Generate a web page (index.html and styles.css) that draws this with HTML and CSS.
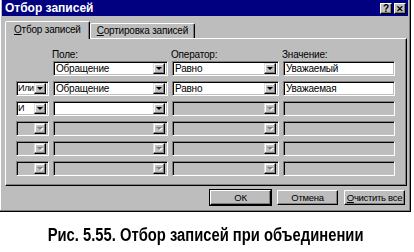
FILE: index.html
```html
<!DOCTYPE html>
<html lang="ru">
<head>
  <meta charset="UTF-8">
  <title>Отбор записей</title>
  <link rel="stylesheet" href="styles.css">
</head>
<body>
  <div class="dialog">
    <div class="titlebar">
      <span class="title">Отбор записей</span>
      <div class="tb-buttons">
        <span class="tb-btn">?</span>
        <span class="tb-btn close">✕</span>
      </div>
    </div>

    <div class="tabs">
      <div class="tab active"><u>О</u>тбор записей</div>
      <div class="tab"><u>С</u>ортировка записей</div>
    </div>

    <div class="panel">
      <div class="grid">
        <span></span>
        <span class="label">Поле:</span>
        <span class="label">Оператор:</span>
        <span class="label">Значение:</span>

        <span></span>
        <div class="combo"><span class="text">Обращение</span><span class="drop"></span></div>
        <div class="combo"><span class="text">Равно</span><span class="drop"></span></div>
        <div class="field"><span class="text">Уважаемый</span></div>

        <div class="combo small"><span class="text">Или</span><span class="drop"></span></div>
        <div class="combo"><span class="text">Обращение</span><span class="drop"></span></div>
        <div class="combo"><span class="text">Равно</span><span class="drop"></span></div>
        <div class="field"><span class="text">Уважаемая</span></div>

        <div class="combo small"><span class="text">И</span><span class="drop"></span></div>
        <div class="combo"><span class="text"></span><span class="drop"></span></div>
        <div class="combo off"><span class="text"></span><span class="drop"></span></div>
        <div class="field off"></div>

        <div class="combo small off"><span class="text"></span><span class="drop"></span></div>
        <div class="combo off"><span class="text"></span><span class="drop"></span></div>
        <div class="combo off"><span class="text"></span><span class="drop"></span></div>
        <div class="field off"></div>

        <div class="combo small off"><span class="text"></span><span class="drop"></span></div>
        <div class="combo off"><span class="text"></span><span class="drop"></span></div>
        <div class="combo off"><span class="text"></span><span class="drop"></span></div>
        <div class="field off"></div>

        <div class="combo small off"><span class="text"></span><span class="drop"></span></div>
        <div class="combo off"><span class="text"></span><span class="drop"></span></div>
        <div class="combo off"><span class="text"></span><span class="drop"></span></div>
        <div class="field off"></div>
      </div>
    </div>

    <div class="buttons">
      <button class="btn default">ОК</button>
      <button class="btn">Отмена</button>
      <button class="btn"><u>О</u>чистить все</button>
    </div>
  </div>

  <p class="caption"><span>Рис. 5.55. Отбор записей при объединении</span></p>
</body>
</html>
```

FILE: styles.css
```css
body { margin: 0; background: #fff; font-family: "Liberation Sans", Arial, sans-serif; font-size: 10px; letter-spacing: -0.2px; color: #000; }
.dialog { width: 411px; height: 212px; box-sizing: border-box; padding: 0 2px 2px 2px; background: #bdbdbd; border-right: 1px solid #000; border-bottom: 1px solid #000; box-shadow: inset -1px -1px 0 #808080, inset 1px 0 0 #fff; display: flex; flex-direction: column; }
.titlebar { height: 16px; background: #000080; color: #fff; display: flex; align-items: center; justify-content: space-between; padding: 0 2px 0 3px; }
.title { font-weight: bold; font-size: 12px; letter-spacing: 0; }
.tb-buttons { display: flex; gap: 2px; }
.tb-btn { width: 12px; height: 11px; box-sizing: border-box; background: #c0c0c0; color: #000; font-size: 10px; font-weight: bold; line-height: 10px; text-align: center; border: 1px solid; border-color: #fff #000 #000 #fff; box-shadow: inset -1px -1px 0 #808080; }
.tb-btn.close { font-size: 9px; }

.tabs { display: flex; align-items: flex-end; margin: 5px 0 0 3px; height: 17px; }
.tab { height: 15px; box-sizing: border-box; padding: 0 6px; line-height: 13px; border: 1px solid; border-bottom: none; border-color: #fff #000 transparent #fff; border-radius: 2px 2px 0 0; box-shadow: inset -1px 0 0 #808080; }
.tab.active { height: 18px; margin-bottom: -1px; padding: 0 8px; line-height: 15px; background: #bdbdbd; position: relative; z-index: 1; }

.panel { margin-left: 3px; width: 402px; height: 148px; box-sizing: border-box; border: 1px solid; border-color: #fff #000 #000 #fff; box-shadow: inset -1px -1px 0 #808080; }
.grid { display: grid; grid-template-columns: 33px 115px 107px 112px; grid-template-rows: 22px repeat(6, 20px); column-gap: 4px; padding-left: 10px; }
.label { align-self: end; line-height: 12px; margin-left: -1px; }

.combo, .field { height: 15px; box-sizing: border-box; background: #fff; border: 1px solid; border-color: #808080 #fff #fff #808080; box-shadow: inset 1px 1px 0 #000, inset -1px -1px 0 #c0c0c0; display: flex; align-items: center; padding: 2px 2px 2px 1px; }
.text { flex: 1; min-width: 0; line-height: 11px; padding-left: 1px; white-space: nowrap; }
.combo.small .text { font-size: 9px; letter-spacing: -0.3px; padding-left: 0; }
.drop { flex: none; width: 12px; height: 11px; box-sizing: border-box; background: #c0c0c0; border: 1px solid; border-color: #dfdfdf #000 #000 #dfdfdf; box-shadow: inset -1px -1px 0 #808080, inset 1px 1px 0 #fff; display: flex; align-items: center; justify-content: center; }
.drop::after { content: ""; border-left: 3px solid transparent; border-right: 3px solid transparent; border-top: 3px solid #000; margin-left: -1px; }
.off { background: #bdbdbd; }
.off .drop::after { border-top-color: #808080; filter: drop-shadow(1px 1px 0 #fff); }

.buttons { display: flex; justify-content: flex-end; gap: 6px; margin-top: 4px; padding-right: 3px; }
.btn { width: 61px; height: 15px; box-sizing: border-box; padding: 0; font: inherit; font-size: 9.5px; letter-spacing: -0.3px; line-height: 11px; white-space: nowrap; background: #bdbdbd; color: #000; border: 1px solid; border-color: #fff #000 #000 #fff; box-shadow: inset -1px -1px 0 #808080; }
.btn.default { outline: 1px solid #000; }

.caption { margin: 13px 0 0 0; width: 411px; text-align: center; }
.caption span { display: inline-block; font-size: 18px; font-weight: bold; letter-spacing: 0; transform: scaleX(0.82); white-space: nowrap; }
```
